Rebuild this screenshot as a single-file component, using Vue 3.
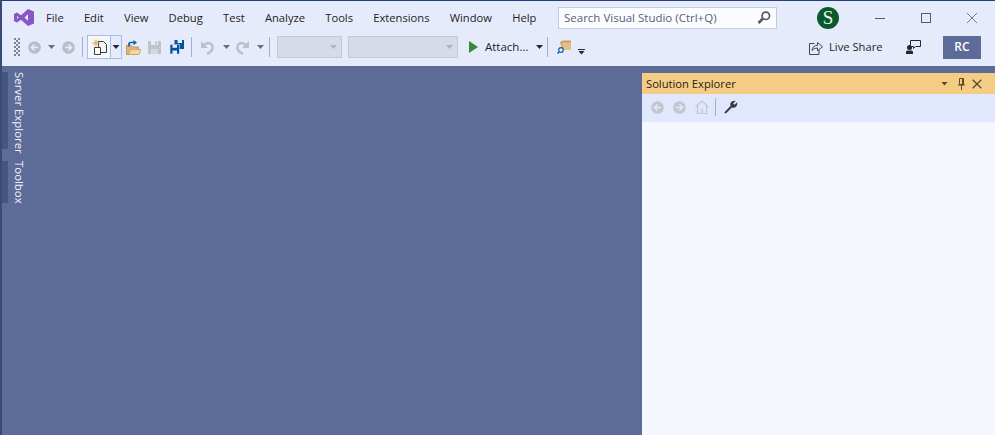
<script setup>
const menus = ['File', 'Edit', 'View', 'Debug', 'Test', 'Analyze', 'Tools', 'Extensions', 'Window', 'Help']
</script>

<template>
  <div class="ide">
    <header class="chrome">
      <div class="titlebar">
        <svg class="logo" width="20" height="17" viewBox="0 0 20 17">
          <path fill="#8757c5" fill-rule="evenodd" d="M14 0 20 2.500V14.500L14 17 7 10.800 3 13.500 0 12V5L3 3.500 7 6.200zM14 5.200 10.500 8.500 14 11.800zM3 7V10L4.700 8.500z" />
        </svg>
        <nav class="menu">
          <span v-for="m in menus" :key="m">{{ m }}</span>
        </nav>
        <div class="search">
          <span>Search Visual Studio (Ctrl+Q)</span>
          <svg width="14" height="13" viewBox="0 0 14 13" fill="none" stroke="#5a5a5c" stroke-width="1.700">
            <circle cx="8.800" cy="4.800" r="3.700" />
            <path d="M6 7.500 1.500 12" stroke-width="2.600" />
          </svg>
        </div>
        <div class="avatar">S</div>
        <div class="win">
          <svg width="10" height="10" viewBox="0 0 10 10"><path d="M0 5.500h10" stroke="#4a5a86" fill="none" /></svg>
          <svg width="10" height="10" viewBox="0 0 10 10"><rect x=".5" y=".5" width="9" height="9" stroke="#4a5a86" fill="none" /></svg>
          <svg width="10" height="10" viewBox="0 0 10 10"><path d="M0 0l10 10M10 0 0 10" stroke="#6d7ba6" fill="none" /></svg>
        </div>
      </div>

      <div class="toolbar">
        <span class="grip"></span>
        <svg class="ic back" width="13" height="13" viewBox="0 0 13 13"><circle cx="6.500" cy="6.500" r="6.300" fill="#b9bdc6" /><path d="M10 6.500H4M6.500 3.500l-3 3 3 3" stroke="#e6ebfb" stroke-width="1.700" fill="none" /></svg>
        <i class="caret dim a1"></i>
        <svg class="ic fwd" width="13" height="13" viewBox="0 0 13 13"><circle cx="6.500" cy="6.500" r="6.300" fill="#b9bdc6" /><path d="M3 6.500h6M6.500 3.500l3 3-3 3" stroke="#e6ebfb" stroke-width="1.700" fill="none" /></svg>
        <i class="sep s1"></i>

        <div class="newbtn">
          <span class="newicon">
            <svg width="15" height="16" viewBox="0 0 15 16">
              <path d="M6.500 2.500h5l3 3v8h-8z" fill="#f6f6f6" stroke="#3d3d3d" />
              <path d="M2.500 8.500h6v7h-6z" fill="#fff" stroke="#3d3d3d" />
              <path d="M4 .5v7M.5 4h7" stroke="#e09a2b" />
              <path d="M1.500 1.500l5 5M6.500 1.500l-5 5" stroke="#e9b45c" stroke-width=".7" />
            </svg>
          </span>
          <span class="newdrop"><i class="caret"></i></span>
        </div>

        <svg class="ic open" width="15" height="15" viewBox="0 0 15 15">
          <path d="M.5 5.500h5l1 1.500h6v7.500H.5z" fill="#dcb67a" stroke="#c79a4f" />
          <path d="M2.500 14.500l2-5H15l-2 5z" fill="#efd6a6" stroke="#c79a4f" stroke-width=".7" />
          <path d="M3 6.500V4Q3 2.500 5 2.500h3" stroke="#0f5fa8" stroke-width="1.700" fill="none" />
          <path d="M7.500 0 11 2.600 7.500 5.200z" fill="#0f5fa8" />
        </svg>
        <svg class="ic save" width="13" height="13" viewBox="0 0 13 13">
          <path d="M0 0h13v13H0z" fill="#bec3cc" />
          <path d="M3 0h7v4H3z" fill="#e6ebfb" /><path d="M7 .8h2v2.400H7z" fill="#bec3cc" />
          <path d="M3 8h7v5H3z" fill="#d3d7de" />
        </svg>
        <svg class="ic saveall" width="14" height="14" viewBox="0 0 14 14">
          <path d="M4.500 0H14v9H4.500z" fill="#00539c" /><path d="M7.500 0H12v3H7.500z" fill="#e6ebfb" />
          <path d="M0 4.500h9.500V14H0z" fill="#00539c" stroke="#e6ebfb" stroke-width=".6" />
          <path d="M2.500 5h4.500v2.800H2.500z" fill="#e6ebfb" /><path d="M2.500 10.500h4.500V14H2.500z" fill="#e6ebfb" />
        </svg>
        <i class="sep s2"></i>

        <svg class="ic undo" width="13" height="15" viewBox="0 0 13 15">
          <path d="M0 1v7h7z" fill="#bcc0c9" />
          <path d="M2.500 5.500Q6.500 1.800 9.800 3.800 12.800 6 11 10 9.500 12.500 6 14" stroke="#bcc0c9" stroke-width="2.500" fill="none" />
        </svg>
        <i class="caret dim a2"></i>
        <svg class="ic redo" width="13" height="15" viewBox="0 0 13 15">
          <path d="M13 1v7H6z" fill="#bcc0c9" />
          <path d="M10.500 5.500Q6.500 1.800 3.200 3.800.2 6 2 10 3.500 12.500 7 14" stroke="#bcc0c9" stroke-width="2.500" fill="none" />
        </svg>
        <i class="caret dim a3"></i>
        <i class="sep s3"></i>

        <div class="combo c1"><i class="caret pale"></i></div>
        <div class="combo c2"><i class="caret pale"></i></div>

        <svg class="ic play" width="9" height="12" viewBox="0 0 9 12"><path d="M0 0l9 6-9 6z" fill="#388a34" /></svg>
        <span class="attach">Attach...</span>
        <i class="caret a4"></i>
        <i class="sep s4"></i>

        <svg class="ic find" width="14" height="14" viewBox="0 0 14 14">
          <path d="M3 2 6 .5h8V9H5z" fill="#c9a25f" />
          <path d="M5 2.500h9V10H6z" fill="#e3bf83" />
          <circle cx="4" cy="10" r="2.300" fill="#e6ebfb" stroke="#0f5fa8" stroke-width="1.200" />
          <path d="M2.300 11.700.5 13.500" stroke="#0f5fa8" stroke-width="1.400" />
        </svg>
        <span class="overflow"><b></b><i class="caret"></i></span>

        <svg class="ic share" width="14" height="15" viewBox="0 0 14 15" fill="none" stroke="#44464f">
          <path d="M5.500 3.500H.5v11h9.500V10" />
          <path d="M3 10.500Q3.500 5.500 8.500 5.300V2.500l5 4.300-5 4V8Q5 7.800 3 10.500z" />
        </svg>
        <span class="live">Live Share</span>
        <svg class="ic feedback" width="15" height="14" viewBox="0 0 15 14">
          <circle cx="3.500" cy="7.500" r="2.500" fill="#26282e" />
          <path d="M0 14v-2q0-1.500 1.500-1.500h4Q7 10.500 7 12v2z" fill="#26282e" />
          <path d="M4.500 .5h10v6H9.500l-2 2v-2h-3z" fill="#e6ebfb" stroke="#26282e" />
        </svg>
        <div class="account">RC</div>
      </div>
    </header>

    <main class="workspace">
      <aside class="rail">
        <div class="tab server"><span class="bar"></span><span class="label">Server Explorer</span></div>
        <div class="tab toolbox"><span class="bar"></span><span class="label">Toolbox</span></div>
      </aside>

      <section class="panel">
        <div class="panel-title">
          <span class="panel-name">Solution Explorer</span>
          <i class="caret brown"></i>
          <svg class="pin" width="7" height="12" viewBox="0 0 7 12"><path d="M1.500 .5h4v6h-4zM0 7h7M3.500 7v5M4.500 1v5" stroke="#5b4a2a" fill="none" /></svg>
          <svg width="10" height="10" viewBox="0 0 10 10"><path d="M.7.700l8.600 8.600M9.300.700.700 9.300" stroke="#5b4a2a" stroke-width="1.300" fill="none" /></svg>
        </div>
        <div class="panel-tools">
          <svg width="13" height="13" viewBox="0 0 13 13"><circle cx="6.500" cy="6.500" r="6.300" fill="#c3c6cd" /><path d="M10 6.500H4M6.500 3.500l-3 3 3 3" stroke="#e1e8fd" stroke-width="1.700" fill="none" /></svg>
          <svg width="13" height="13" viewBox="0 0 13 13"><circle cx="6.500" cy="6.500" r="6.300" fill="#c3c6cd" /><path d="M3 6.500h6M6.500 3.500l3 3-3 3" stroke="#e1e8fd" stroke-width="1.700" fill="none" /></svg>
          <svg width="14" height="14" viewBox="0 0 14 14"><path d="M.5 7 7 1l6.500 6M2.500 6v7.500h9V6" fill="none" stroke="#c3c6cd" stroke-width="1.200" /><path d="M5.500 8.500h3v5h-3z" fill="#d3d6dc" /></svg>
          <i class="sep tool-sep"></i>
          <svg class="wrench" width="14" height="14" viewBox="0 0 15 15"><path d="M1 12.500 7 6.500Q6 3 8.500 1.500 10.500.300 12.500 1L9.800 3.800l1.400 1.400L14 2.500Q14.700 4.500 13.500 6.500 12 9 8.500 8L2.500 14Q1.500 14.800.700 14 .200 13.300 1 12.500z" fill="#3a3a3e" /></svg>
        </div>
        <div class="panel-body"></div>
      </section>
    </main>
  </div>
</template>

<style>
html, body { margin: 0; padding: 0; }
</style>

<style scoped>
.ide {
  width: 995px;
  height: 435px;
  box-sizing: border-box;
  display: flex;
  flex-direction: column;
  overflow: hidden;
  font-family: "Open Sans", "Noto Sans", sans-serif;
  font-size: 11.5px;
  color: #1e1e1e;
  background: #5d6b99;
  border-left: 2px solid #3a4a78;
}
.chrome {
  height: 66px;
  flex: none;
  box-sizing: border-box;
  background: #e6ebfb;
  border-top: 1px solid #22407f;
}
.titlebar {
  height: 33px;
  display: flex;
  align-items: center;
}
.logo { flex: none; margin-left: 12px; }
.menu {
  display: flex;
  gap: 20.2px;
  flex: none;
  margin-left: 12px;
  width: 512px;
  font-size: 11.2px;
  white-space: nowrap;
}
.search {
  width: 219px;
  height: 22px;
  flex: none;
  box-sizing: border-box;
  display: flex;
  align-items: center;
  justify-content: space-between;
  padding: 0 5px 0 5px;
  background: #fbfcff;
  border: 1px solid #c4cbdd;
  color: #596072;
}
.avatar {
  width: 22px;
  height: 22px;
  flex: none;
  margin-left: 40px;
  border-radius: 50%;
  background: #0b5a2c;
  color: #f2f6f2;
  font-family: "Liberation Serif", serif;
  font-size: 19px;
  line-height: 22px;
  text-align: center;
}
.win {
  display: flex;
  gap: 36px;
  margin-left: 36px;
}
.toolbar {
  height: 28px;
  display: flex;
  align-items: center;
  margin-top: -1px;
}
.ic { flex: none; }
.grip {
  flex: none;
  width: 6px;
  height: 18px;
  margin-left: 12px;
  background-image:
    radial-gradient(circle at 1px 1px, #7b8598 .8px, transparent 1px),
    radial-gradient(circle at 1px 1px, #7b8598 .8px, transparent 1px);
  background-size: 4px 4px;
  background-position: 0 0, 2px 2px;
}
.caret {
  display: block;
  flex: none;
  width: 7px;
  height: 4px;
  background: #26282e;
  clip-path: polygon(0 0, 100% 0, 50% 100%);
}
.caret.dim { background: #6b6f7a; }
.caret.pale { background: #aeb3be; }
.caret.brown { background: #5b4a2a; margin-right: 3px; }
.sep {
  display: block;
  flex: none;
  width: 1px;
  height: 20px;
  background: #9fb0d0;
}
.back { margin-left: 8px; }
.a1 { margin-left: 7px; }
.fwd { margin-left: 7px; }
.s1 { margin-left: 7px; }
.newbtn {
  display: flex;
  flex: none;
  height: 24px;
  margin-left: 4px;
  box-sizing: border-box;
  border: 1px solid #a9bde0;
}
.newicon {
  width: 22px;
  display: flex;
  align-items: center;
  justify-content: center;
  background: #f5f7ff;
}
.newdrop {
  width: 10px;
  display: flex;
  align-items: center;
  justify-content: center;
  border-left: 1px solid #a9bde0;
}
.open { margin-left: 4px; }
.save { margin-left: 7px; }
.saveall { margin-left: 9px; }
.s2 { margin-left: 7px; }
.undo { margin-left: 9px; }
.a2 { margin-left: 9px; }
.redo { margin-left: 6px; }
.a3 { margin-left: 8px; }
.s3 { margin-left: 5px; }
.combo {
  height: 22px;
  flex: none;
  box-sizing: border-box;
  display: flex;
  align-items: center;
  justify-content: flex-end;
  padding-right: 4px;
  background: #d5dbe7;
  border: 1px solid #c2cad9;
}
.c1 { width: 65px; margin-left: 7px; }
.c2 { width: 110px; margin-left: 6px; }
.play { margin-left: 11px; }
.attach { margin-left: 7px; width: 45px; flex: none; padding-bottom: 2px; white-space: nowrap; }
.a4 { margin-left: 6px; }
.s4 { margin-left: 4px; }
.find { margin-left: 9px; }
.overflow {
  display: flex;
  flex: none;
  flex-direction: column;
  align-items: center;
  gap: 1px;
  width: 7px;
  margin-left: 7px;
  margin-top: 9px;
}
.overflow b { display: block; width: 7px; height: 1px; background: #26282e; }
.share { margin-left: 224px; }
.live { margin-left: 6px; width: 53px; flex: none; padding-bottom: 2px; font-size: 11.2px; white-space: nowrap; }
.feedback { margin-left: 24px; }
.account {
  width: 38px;
  height: 23px;
  flex: none;
  margin-left: 22px;
  background: #5d6b99;
  color: #fff;
  font-weight: 600;
  font-size: 12px;
  line-height: 22px;
  text-align: center;
}
.workspace {
  flex: 1;
  display: flex;
  justify-content: space-between;
  min-height: 0;
}
.rail {
  width: 26px;
  padding-top: 6px;
  display: flex;
  flex-direction: column;
  gap: 12px;
}
.tab { display: flex; }
.bar { width: 6px; background: #44557f; }
.server { height: 77px; }
.toolbox { height: 42px; }
.label {
  writing-mode: vertical-rl;
  margin-left: 5px;
  color: #f2f4fa;
  font-size: 11.4px;
  line-height: 12px;
  white-space: nowrap;
}
.panel {
  width: 353px;
  margin-top: 7px;
  display: flex;
  flex-direction: column;
}
.panel-title {
  height: 21px;
  flex: none;
  display: flex;
  align-items: center;
  gap: 7px;
  padding: 0 13px 0 4px;
  background: #f5cc84;
}
.panel-name { flex: 1; font-size: 11.2px; }
.panel-tools {
  height: 28px;
  flex: none;
  box-sizing: border-box;
  display: flex;
  align-items: center;
  gap: 9px;
  padding: 0 0 2px 9px;
  background: #e1e8fd;
}
.tool-sep { height: 18px; margin-left: -3px; }
.wrench { margin-left: -1px; }
.panel-body { flex: 1; background: #f5f7ff; }
</style>
